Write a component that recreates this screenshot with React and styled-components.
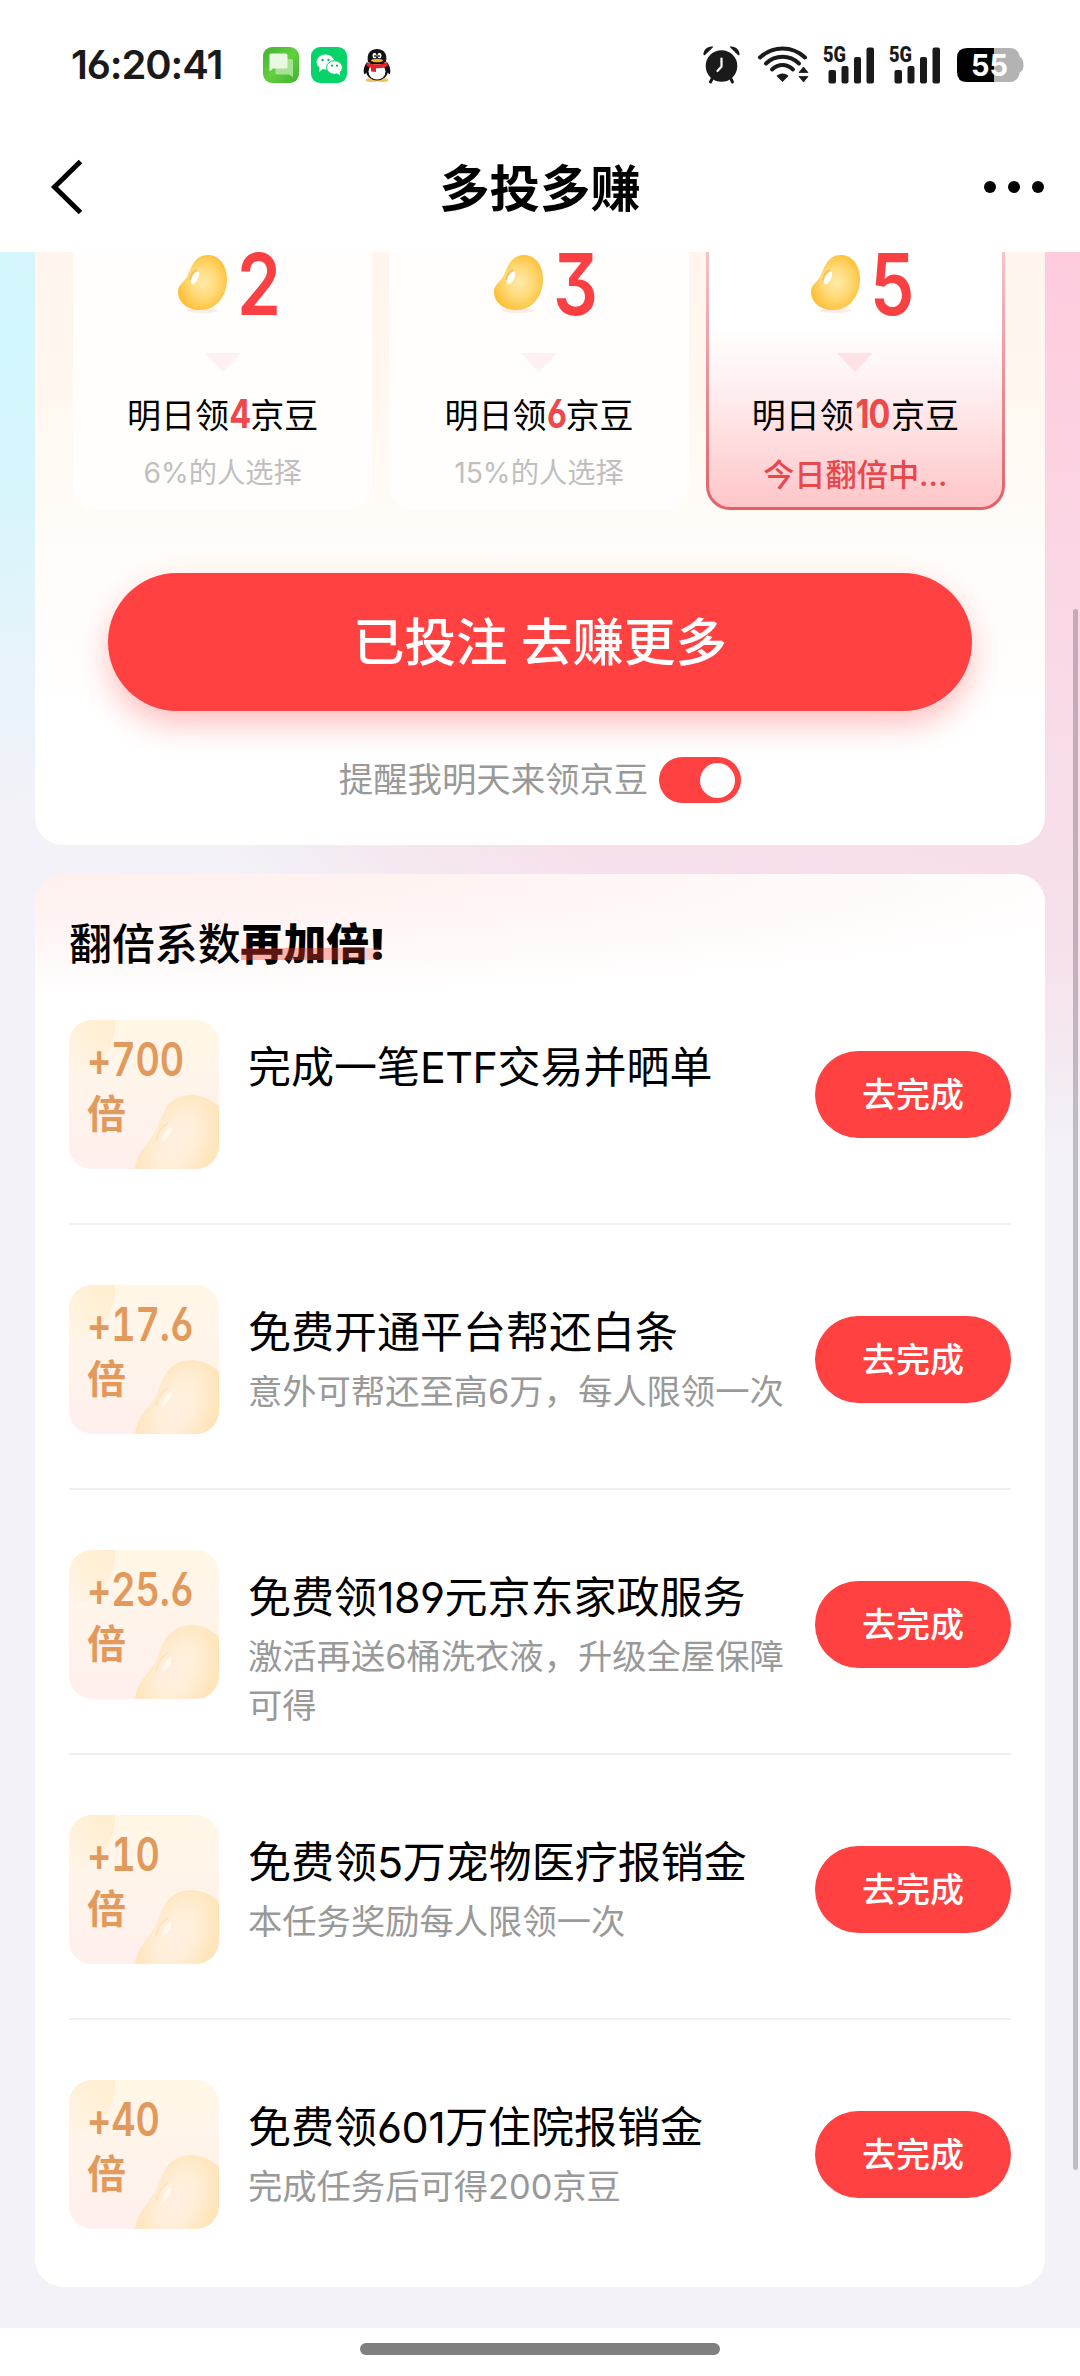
// src/pages/BeanBoost.jsx
import React, { useState } from 'react';
import styled, { createGlobalStyle, css } from 'styled-components';

const GlobalStyle = createGlobalStyle`
  * {
    box-sizing: border-box;
  }

  body {
    margin: 0;
    background: #fff;
    font-family: Inter, 'Noto Sans CJK SC', sans-serif;
    color: #000;
    -webkit-font-smoothing: antialiased;
  }
`;

const Screen = styled.div`
  display: flex;
  flex-direction: column;
  width: 1080px;
  height: 2376px;
  overflow: hidden;
`;

const StatusBar = styled.div`
  display: flex;
  align-items: center;
  height: 129px;
  padding: 0 56px 0 71px;
`;

const Clock = styled.span`
  width: 192px;
  font-size: 40px;
  font-weight: 600;
  letter-spacing: -1.1px;
  color: #1a1a1a;
  white-space: nowrap;
  font-feature-settings: 'cv03';
`;

const AppIcons = styled.div`
  display: flex;
  align-items: center;
  gap: 12px;
  flex: 1;
`;

const SystemIcons = styled.div`
  display: flex;
  align-items: center;
`;

const SystemIcon = styled.svg`
  display: block;
  overflow: visible;
  margin-right: ${props => props.$gap || 0}px;
`;

const NavBar = styled.div`
  display: grid;
  grid-template-columns: 200px 1fr 200px;
  align-items: center;
  height: 123px;
  padding-bottom: 8px;
`;

const BackIcon = styled.svg`
  margin-left: 50px;
`;

const NavTitle = styled.h1`
  margin: 4px 0 0;
  font-size: 50.4px;
  font-weight: 700;
  line-height: 70px;
  text-align: center;
`;

const MoreButton = styled.div`
  display: flex;
  justify-content: flex-end;
  gap: 12px;
  padding-right: 36px;

  i {
    width: 12px;
    height: 12px;
    border-radius: 50%;
    background: #000;
  }
`;

const ScrollArea = styled.main`
  position: relative;
  display: flex;
  flex-direction: column;
  gap: 29px;
  height: 2076px;
  padding: 0 35px;
  background:
    radial-gradient(ellipse 420px 480px at 0 90px, #d2f8fd 0%, #d6f6fc 30%, rgba(226, 243, 251, 0.8) 62%, rgba(243, 242, 248, 0) 100%),
    radial-gradient(ellipse 560px 640px at 1080px 0, #fecadc 0%, rgba(253, 210, 225, 0.75) 45%, rgba(246, 223, 235, 0) 100%),
    radial-gradient(ellipse 900px 700px at 960px 210px, #f6dfeb 0%, #f6e0ec 70%, rgba(243, 242, 248, 0) 100%),
    #f3f2f8;
`;

const ScrollThumb = styled.div`
  position: absolute;
  top: 357px;
  right: 2px;
  width: 5px;
  height: 1561px;
  border-radius: 3px;
  background: rgba(60, 50, 70, 0.28);
`;

const BetPanel = styled.section`
  height: 593px;
  border-radius: 0 0 28px 28px;
  background: linear-gradient(180deg, #fff5ec 0%, #fff8f1 25%, #fffcf9 50%, #fff 80%);
`;

const Options = styled.div`
  display: grid;
  grid-template-columns: repeat(3, 1fr);
  gap: 17px;
  padding: 0 40px 0 38px;
`;

const OptionCard = styled.div`
  display: flex;
  flex-direction: column;
  align-items: center;
  height: 258px;
  border-radius: 0 0 24px 24px;
  background: #fffefd;

  ${props => props.$active && css`
    border: 3px solid transparent;
    border-top: 0;
    background:
      linear-gradient(180deg, #fff 0%, #fff 30%, #fff0f1 52%, #ffc6c8 100%) padding-box,
      linear-gradient(180deg, #f6c3c8 0%, #ee8f96 50%, #e25f68 100%) border-box;
  `}
`;

const Amount = styled.div`
  display: flex;
  align-items: center;
  height: 65px;
  margin-left: 13px;
`;

const AmountValue = styled.span`
  display: block;
  width: 47px;
  margin-left: 5px;
  font-size: 85px;
  font-weight: 600;
  line-height: 65px;
  text-align: center;
  color: #fb4044;
  font-feature-settings: 'cv09';
  transform: scaleX(0.83);
`;

const Arrow = styled.svg`
  display: block;
  margin-top: 36px;
`;

const Reward = styled.div`
  display: flex;
  align-items: baseline;
  margin-top: 17px;
  font-size: 34px;
  line-height: 50px;
`;

const RewardValue = styled.span`
  display: block;
  margin: 0 -2px;
  font-size: 39px;
  font-weight: 700;
  letter-spacing: -1px;
  color: #ee474c;
  font-feature-settings: 'cv03';
  transform: scaleX(0.83);
`;

const Choice = styled.div`
  margin-top: ${props => (props.$active ? 14 : 12)}px;
  font-size: ${props => (props.$active ? 31.2 : 28.3)}px;
  font-weight: ${props => (props.$active ? 500 : 400)};
  line-height: 40px;
  color: ${props => (props.$active ? '#e9474e' : '#bfbfbf')};
`;

const BetButton = styled.button`
  display: block;
  width: 864px;
  height: 138px;
  margin: 63px auto 0;
  padding: 0 0 8px;
  border: 0;
  border-radius: 69px;
  background: #ff4142;
  box-shadow: 0 14px 30px rgba(255, 65, 66, 0.32);
  font-family: inherit;
  font-size: 51.5px;
  font-weight: 500;
  color: #fff;
`;

const Reminder = styled.div`
  display: flex;
  justify-content: center;
  align-items: center;
  gap: 11px;
  height: 46px;
  margin-top: 46px;
  font-size: 34.4px;
  color: #999;
`;

const ReminderLabel = styled.span`
  padding-bottom: 6px;
`;

const Switch = styled.button`
  display: flex;
  justify-content: ${props => (props.$on ? 'flex-end' : 'flex-start')};
  align-items: center;
  width: 82px;
  height: 46px;
  padding: 0 6px;
  border: 0;
  border-radius: 23px;
  background: ${props => (props.$on ? '#ff4142' : '#ddd')};

  &::after {
    content: '';
    width: 35px;
    height: 35px;
    border-radius: 50%;
    background: #fff;
  }
`;

const TaskPanel = styled.section`
  height: 1413px;
  padding: 40px 34px 0;
  border-radius: 28px;
  background: radial-gradient(ellipse 1150px 125px at 0 0, #fff0ee 0%, #fff4f3 40%, #fff 100%) #fff;
`;

const TaskHeading = styled.h2`
  margin: 0 0 46px;
  font-size: 42.900px;
  font-weight: 500;
  line-height: 60px;
`;

const Highlight = styled.span`
  position: relative;
  font-weight: 900;

  &::after {
    content: '';
    position: absolute;
    left: 0;
    bottom: 10px;
    width: 138px;
    height: 12px;
    background: linear-gradient(90deg, rgba(240, 60, 45, 0.38) 0%, rgba(240, 60, 45, 0.38) 60%, rgba(240, 60, 45, 0.2) 100%);
  }
`;

const TaskRow = styled.div`
  display: flex;
  align-items: flex-start;
  height: 265px;
  padding-top: 60px;
  border-bottom: 2px solid #f0f0f1;

  &:first-of-type {
    height: 205px;
    padding-top: 0;
  }

  &:last-of-type {
    border-bottom: 0;
  }
`;

const Badge = styled.div`
  position: relative;
  width: 150px;
  height: 149px;
  margin-right: 29px;
  padding: 12px 0 0 18px;
  border-radius: 23px;
  overflow: hidden;
  background: linear-gradient(180deg, #fff7e6 0%, #fff4ea 45%, #ffefee 100%);
`;

const BadgeArt = styled.svg`
  position: absolute;
  inset: 0;
`;

const BadgeValue = styled.div`
  position: relative;
  font-size: 46px;
  font-weight: 600;
  line-height: 54px;
  letter-spacing: -0.2px;
  white-space: nowrap;
  color: #e2995c;
  font-feature-settings: 'cv03', 'tnum';
  transform: scaleX(0.82);
  transform-origin: left center;
`;

const BadgeUnit = styled.div`
  position: relative;
  font-size: 39px;
  font-weight: 700;
  line-height: 56px;
  color: #e2995c;
`;

const TaskInfo = styled.div`
  flex: 1;
  padding-top: 17px;
`;

const TaskTitle = styled.div`
  font-size: 43px;
  line-height: 60px;
  white-space: nowrap;
  font-feature-settings: 'cv03', 'cv04';
`;

const Digits = styled.span`
  letter-spacing: -0.5px;
`;

const TaskNote = styled.div`
  width: 556px;
  margin-top: 5px;
  font-size: 34.3px;
  line-height: 49px;
  color: #999;
`;

const TaskButton = styled.button`
  flex: none;
  width: 196px;
  height: 87px;
  margin-top: 31px;
  margin-left: -20px;
  padding: 0 0 5px;
  border: 0;
  border-radius: 44px;
  background: #ff4142;
  font-family: inherit;
  font-size: 34px;
  font-weight: 500;
  color: #fff;
`;

const HomeBar = styled.div`
  display: flex;
  justify-content: center;
  padding-top: 15px;
  height: 48px;

  i {
    width: 360px;
    height: 12px;
    border-radius: 6px;
    background: #7f7f7f;
  }
`;

const options = [
  { bet: '2', reward: '4', choice: '6%的人选择' },
  { bet: '3', reward: '6', choice: '15%的人选择' },
  { bet: '5', reward: '10', choice: '今日翻倍中...', active: true },
];

const tasks = [
  { value: '+700', title: ['完成一笔', 'ETF', '交易并晒单'] },
  { value: '+17.6', title: ['免费开通平台帮还白条'], note: '意外可帮还至高6万，每人限领一次' },
  { value: '+25.6', title: ['免费领', '189', '元京东家政服务'], note: '激活再送6桶洗衣液，升级全屋保障可得' },
  { value: '+10', title: ['免费领', '5', '万宠物医疗报销金'], note: '本任务奖励每人限领一次' },
  { value: '+40', title: ['免费领', '601', '万住院报销金'], note: '完成任务后可得200京豆' },
];

const BEAN = 'M30 0C41 0 49 10 49 24C49 42 38 55 22 55C9 55 0 47 0 37C0 30 5 28 9 22C13 14 16 0 30 0Z';

const Bean = () => (
  <svg width="50" height="60" viewBox="0 0 50 60">
    <defs>
      <radialGradient id="beanFill" cx="0.52" cy="0.5" r="0.55">
        <stop offset="0" stopColor="#ffeaa8" />
        <stop offset="0.5" stopColor="#ffda78" />
        <stop offset="1" stopColor="#fdbf36" />
      </radialGradient>
    </defs>
    <ellipse cx="24" cy="55.500" rx="16" ry="2.500" fill="#fcebe6" />
    <path d={BEAN} fill="url(#beanFill)" />
    <ellipse cx="17" cy="23" rx="3" ry="7" transform="rotate(28 17 23)" fill="#fff" />
    <path d="M12 25C13 20 16 16 19 15" stroke="#e8c269" strokeWidth="1.5" fill="none" />
  </svg>
);

const BadgeBackdrop = () => (
  <BadgeArt width="150" height="149" viewBox="0 0 150 149">
    <defs>
      <linearGradient id="badgeGlow" x1="1" y1="0" x2="0" y2="1">
        <stop offset="0" stopColor="#ffedcd" />
        <stop offset="1" stopColor="#ffedcd" stopOpacity="0" />
      </linearGradient>
      <radialGradient
        id="badgeBean"
        gradientUnits="userSpaceOnUse"
        cx="0"
        cy="0"
        r="1"
        gradientTransform="translate(108 122) rotate(-62) scale(58 36)"
      >
        <stop offset="0" stopColor="#ffefe0" />
        <stop offset="0.45" stopColor="#ffeed9" />
        <stop offset="1" stopColor="#fee5ba" />
      </radialGradient>
    </defs>
    <path d="M0 0H46C47 28 30 52 0 56Z" fill="url(#badgeGlow)" />
    <path
      d="M66 149C67 134 79 124 86 112C93 99 95 76 122 75C134 75 143 80 150 87V149Z"
      fill="url(#badgeBean)"
    />
    <path d="M93 122C94 114 98 108 102 107C104 111 98 120 93 122Z" fill="#fffaf0" />
    <path d="M87 121C89 112 94 106 99 103" stroke="#fee4b8" strokeWidth="2" fill="none" />
  </BadgeArt>
);

const MessageIcon = () => (
  <svg width="36" height="36" viewBox="0 0 36 36">
    <defs>
      <linearGradient id="msg" x1="0" y1="0" x2="1" y2="1">
        <stop offset="0" stopColor="#43b13a" />
        <stop offset="0.5" stopColor="#62cf3e" />
        <stop offset="1" stopColor="#3db52f" />
      </linearGradient>
    </defs>
    <rect width="36" height="36" rx="9" fill="url(#msg)" />
    <path d="M14 12H28.5Q30 12 30 13.5V30L26 27.5H14Q12.500 27.500 12.500 26V13.500Q12.500 12 14 12Z" fill="#b5e6a5" opacity="0.85" />
    <path d="M8 6.500H22.500Q24.500 6.500 24.500 8.500V20Q24.500 21.500 23 21.500H10L6.500 24.500V8Q6.500 6.500 8 6.500Z" fill="#e9f8e3" />
  </svg>
);

const WeChatIcon = () => (
  <svg width="36" height="36" viewBox="0 0 36 36">
    <rect width="36" height="36" rx="9" fill="#06d46b" />
    <ellipse cx="14.500" cy="15" rx="9" ry="7.500" fill="#fff" />
    <path d="M9 19L8 25L13 21Z" fill="#fff" />
    <ellipse cx="23.500" cy="20.500" rx="8" ry="6.800" fill="#fff" stroke="#06d46b" strokeWidth="1" />
    <path d="M26 26L29 28.500L28.500 24Z" fill="#fff" />
    <circle cx="11.500" cy="13" r="1.200" fill="#06b85c" />
    <circle cx="17.500" cy="13" r="1.200" fill="#06b85c" />
    <circle cx="21" cy="18.700" r="1.100" fill="#06b85c" />
    <circle cx="26" cy="18.700" r="1.100" fill="#06b85c" />
  </svg>
);

const PenguinIcon = () => (
  <svg width="36" height="36" viewBox="0 0 36 36">
    <ellipse cx="12.500" cy="33" rx="6" ry="2" fill="#f2c35b" />
    <ellipse cx="23.500" cy="33" rx="6" ry="2" fill="#f2c35b" />
    <path d="M8 15C5 19 4 23 5 27C7 27 8 25 9 23Z" fill="#111" />
    <path d="M28 15C31 19 32 23 31 27C29 27 28 25 27 23Z" fill="#111" />
    <ellipse cx="18" cy="23.500" rx="11" ry="10" fill="#111" />
    <ellipse cx="18" cy="24.500" rx="8.500" ry="8" fill="#fff" />
    <path d="M9 15C7 5 13 2 18 2C23 2 29 5 27 15Q18 20 9 15Z" fill="#111" />
    <path d="M8 15Q18 20 28 15L29 19Q23 22 17 21V25L12 24.500V20.500Q9 20 7.500 18.500Z" fill="#e4232a" />
    <ellipse cx="15.500" cy="8.500" rx="2" ry="2.700" fill="#fff" />
    <ellipse cx="20.500" cy="8.500" rx="2" ry="2.700" fill="#fff" />
    <circle cx="16" cy="9" r="0.900" fill="#111" />
    <circle cx="20" cy="9" r="0.900" fill="#111" />
    <ellipse cx="18" cy="13.500" rx="6" ry="1.800" fill="#f5b324" />
  </svg>
);

const AlarmIcon = () => (
  <SystemIcon $gap={18} width="37" height="38" viewBox="0 0 37 38">
    <g fill="none" stroke="#1a1a1a" strokeWidth="3" strokeLinecap="round">
      <path d="M9 33L7.500 36M28 33L29.500 36" />
    </g>
    <circle cx="18.500" cy="20" r="15.800" fill="#1a1a1a" />
    <path d="M0.500 9C0 4 5 -0.500 10.500 0.800L1.800 9.200ZM36.500 9C37 4 32 -0.500 26.500 0.800L35.200 9.200Z" fill="#1a1a1a" />
    <path d="M18.500 12.500V20.500L14.500 25" stroke="#fff" strokeWidth="2.200" fill="none" strokeLinecap="round" />
  </SystemIcon>
);

const WifiIcon = () => (
  <SystemIcon $gap={14} width="51" height="37" viewBox="0 0 51 37">
    <g fill="none" stroke="#1a1a1a" strokeWidth="4" strokeLinecap="round">
      <path d="M2 11.500C15 -0.500 34 -0.500 47 11.500" />
      <path d="M8 17.500C17.500 8.500 31.500 8.500 41 17.500" />
      <path d="M14 23.500C20.500 17.500 28.500 17.500 35 23.500" />
    </g>
    <path d="M24.500 36L18.500 30C21.500 26.500 27.500 26.500 30.500 30Z" fill="#1a1a1a" />
    <path d="M45.500 21L50 26.500H41ZM45.500 36L50 30.500H41Z" fill="#1a1a1a" stroke="#1a1a1a" strokeWidth="0.800" />
  </SystemIcon>
);

const SignalIcon = ({ gap }) => (
  <SystemIcon $gap={gap} width="52" height="38" viewBox="0 0 52 38">
    <g fill="#1a1a1a">
      <rect x="5.500" y="24" width="7.500" height="13.500" rx="2" />
      <rect x="18.500" y="20" width="7" height="17.500" rx="2" />
      <rect x="31" y="11" width="7" height="26.500" rx="2" />
      <rect x="43.500" y="1.500" width="7.500" height="36" rx="2" />
    </g>
    <text x="0" y="16" fontFamily="Roboto" fontWeight="900" fontSize="21.500" textLength="23" lengthAdjust="spacingAndGlyphs" fill="#1a1a1a">5G</text>
  </SystemIcon>
);

const BatteryIcon = () => (
  <SystemIcon width="67" height="34" viewBox="0 0 67 34">
    <path d="M10 0H37V34H10Q0 34 0 24V10Q0 0 10 0Z" fill="#000" />
    <path d="M37 0H53Q61 0 63 9Q66.500 11 66.500 17Q66.500 23 63 24Q61 34 53 34H37Z" fill="#b3b3b3" />
    <text x="14" y="28" fontFamily="Inter" fontWeight="700" fontSize="30" textLength="37" lengthAdjust="spacingAndGlyphs" fill="#fff">55</text>
  </SystemIcon>
);

const App = () => {
  const [reminder, setReminder] = useState(true);

  return (
    <Screen>
      <GlobalStyle />
      <StatusBar>
        <Clock>16:20:41</Clock>
        <AppIcons>
          <MessageIcon />
          <WeChatIcon />
          <PenguinIcon />
        </AppIcons>
        <SystemIcons>
          <AlarmIcon />
          <WifiIcon />
          <SignalIcon gap={14} />
          <SignalIcon gap={16} />
          <BatteryIcon />
        </SystemIcons>
      </StatusBar>

      <NavBar>
        <BackIcon width="34" height="56" viewBox="0 0 34 56">
          <path d="M30.500 2.500L4.500 28L30.500 53.500" fill="none" stroke="#000" strokeWidth="5" />
        </BackIcon>
        <NavTitle>多投多赚</NavTitle>
        <MoreButton><i /><i /><i /></MoreButton>
      </NavBar>

      <ScrollArea>
        <BetPanel>
          <Options>
            {options.map(option => (
              <OptionCard key={option.bet} $active={option.active}>
                <Amount>
                  <Bean />
                  <AmountValue>{option.bet}</AmountValue>
                </Amount>
                <Arrow width="36" height="19" viewBox="0 0 36 19">
                  <path d="M0 0H36L18 19Z" fill={option.active ? '#ffe2e5' : '#fff0f1'} />
                </Arrow>
                <Reward>
                  明日领<RewardValue>{option.reward}</RewardValue>京豆
                </Reward>
                <Choice $active={option.active}>{option.choice}</Choice>
              </OptionCard>
            ))}
          </Options>
          <BetButton>已投注 去赚更多</BetButton>
          <Reminder>
            <ReminderLabel>提醒我明天来领京豆</ReminderLabel>
            <Switch $on={reminder} onClick={() => setReminder(!reminder)} />
          </Reminder>
        </BetPanel>

        <TaskPanel>
          <TaskHeading>翻倍系数<Highlight>再加倍!</Highlight></TaskHeading>
          {tasks.map(task => (
            <TaskRow key={task.value}>
              <Badge>
                <BadgeBackdrop />
                <BadgeValue>{task.value}</BadgeValue>
                <BadgeUnit>倍</BadgeUnit>
              </Badge>
              <TaskInfo>
                <TaskTitle>
                  {task.title[0]}
                  <Digits>{task.title[1]}</Digits>
                  {task.title[2]}
                </TaskTitle>
                {task.note && <TaskNote>{task.note}</TaskNote>}
              </TaskInfo>
              <TaskButton>去完成</TaskButton>
            </TaskRow>
          ))}
        </TaskPanel>
        <ScrollThumb />
      </ScrollArea>

      <HomeBar><i /></HomeBar>
    </Screen>
  );
};

export default App;
